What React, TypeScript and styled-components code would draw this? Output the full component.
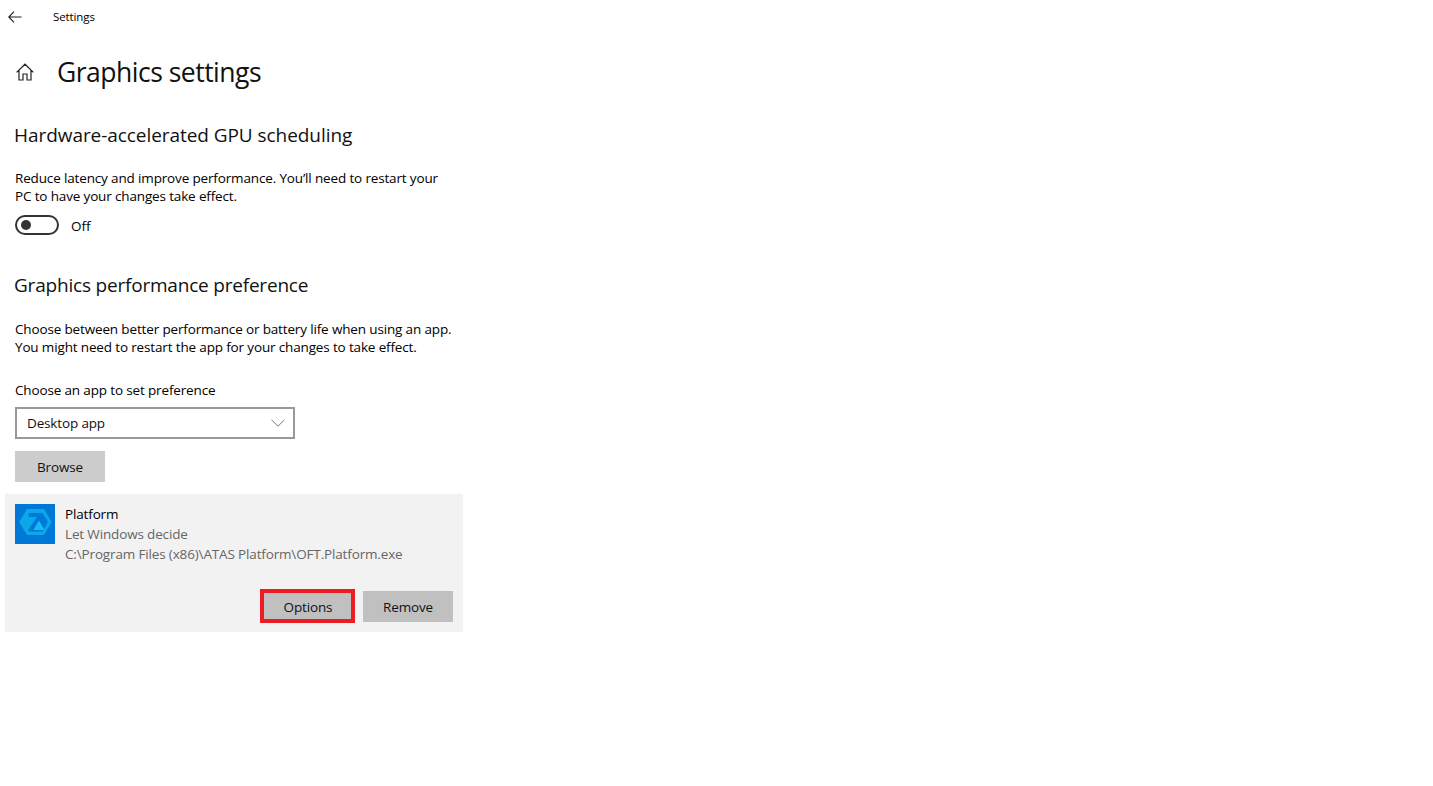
import styled, { createGlobalStyle } from "styled-components";

const GlobalStyle = createGlobalStyle`
  html, body {
    margin: 0;
    padding: 0;
    background: #fff;
    font-family: "Open Sans", "Noto Sans", "Liberation Sans", sans-serif;
    color: #000;
  }
`;

const Page = styled.div`
  width: 1433px;
  height: 786px;
  overflow: hidden;
`;

const TopBar = styled.header`
  display: flex;
  align-items: center;
  height: 33px;
  padding-left: 8px;
`;

const BackButton = styled.div`
  display: flex;
  width: 45px;
  color: #222;
`;

const BarTitle = styled.span`
  font-size: 11.5px;
  letter-spacing: -0.1px;
`;

const TitleRow = styled.div`
  display: flex;
  align-items: center;
  height: 40px;
  margin-top: 19px;
  padding-left: 16px;
`;

const HomeIcon = styled.div`
  display: flex;
  width: 41px;
  color: #222;
`;

const PageTitle = styled.h1`
  margin: 0;
  font-size: 26.5px;
  font-weight: 400;
  line-height: 40px;
  letter-spacing: -0.5px;
  color: #111;
`;

const Column = styled.main`
  display: flex;
  flex-direction: column;
  width: 458px;
  padding-left: 5px;
`;

const SectionTitle = styled.h2<{ $top: number; $spacing: number }>`
  margin: ${(p) => p.$top}px 0 0 9px;
  font-size: 19px;
  font-weight: 400;
  line-height: 28px;
  letter-spacing: ${(p) => p.$spacing}px;
  color: #111;
`;

const Paragraph = styled.p<{ $top: number }>`
  margin: ${(p) => p.$top}px 0 0 10px;
  font-size: 13.5px;
  line-height: 18px;
  letter-spacing: -0.15px;
  white-space: nowrap;
`;

const ToggleRow = styled.div`
  display: flex;
  align-items: center;
  gap: 12px;
  height: 20px;
  margin: 10px 0 0 10px;
  font-size: 13.5px;
`;

const ToggleTrack = styled.div`
  display: flex;
  align-items: center;
  box-sizing: border-box;
  width: 44px;
  height: 20px;
  padding-left: 4px;
  border: 2px solid #333;
  border-radius: 10px;
`;

const ToggleKnob = styled.div`
  width: 10px;
  height: 10px;
  border-radius: 50%;
  background: #333;
`;

const ToggleLabel = styled.span`
  margin-top: 2px;
`;

const FieldLabel = styled.label`
  margin: 25px 0 0 10px;
  font-size: 13.5px;
  line-height: 18px;
  letter-spacing: -0.15px;
`;

const Select = styled.div`
  display: flex;
  align-items: center;
  justify-content: space-between;
  box-sizing: border-box;
  width: 280px;
  height: 32px;
  margin: 8px 0 0 10px;
  padding: 0 8px 0 10px;
  border: 2px solid #999;
  font-size: 13.5px;
  letter-spacing: -0.15px;
  color: #111;
`;

const Button = styled.div<{ $tone: string }>`
  display: flex;
  align-items: center;
  justify-content: center;
  width: 90px;
  height: 31px;
  background: ${(p) => p.$tone};
  font-size: 13.5px;
  letter-spacing: -0.15px;
  color: #111;
`;

const BrowseWrap = styled.div`
  margin: 12px 0 0 10px;
`;

const Card = styled.section`
  display: flex;
  flex-direction: column;
  box-sizing: border-box;
  height: 138px;
  margin-top: 12px;
  padding: 10px;
  background: #f2f2f2;
`;

const AppRow = styled.div`
  display: flex;
  gap: 10px;
`;

const AppIcon = styled.div`
  display: flex;
  width: 40px;
  height: 40px;
`;

const AppText = styled.div`
  display: flex;
  flex-direction: column;
  font-size: 13.5px;
  line-height: 20px;
  letter-spacing: -0.15px;
`;

const AppDetail = styled.span`
  color: #666;
  white-space: nowrap;
`;

const CardActions = styled.div`
  display: flex;
  justify-content: flex-end;
  gap: 10px;
  margin-top: auto;
`;

const OptionsHighlight = styled.div`
  position: relative;

  &::after {
    content: "";
    position: absolute;
    inset: -2px -2px -1px -3px;
    border: 4px solid #ed1c24;
  }
`;

export default function App() {
  return (
    <Page>
      <GlobalStyle />
      <TopBar>
        <BackButton>
          <svg width="14" height="12" viewBox="0 0 14 12" fill="none" stroke="currentColor" strokeWidth="1.1">
            <path d="M13.5 6H.9M6 .6.8 6 6 11.4" />
          </svg>
        </BackButton>
        <BarTitle>Settings</BarTitle>
      </TopBar>
      <TitleRow>
        <HomeIcon>
          <svg width="18" height="18" viewBox="0 0 18 18" fill="none" stroke="currentColor" strokeWidth="1.2">
            <path d="M.6 9.4 9 1.2l8.4 8.2M3 7.4V17h4v-6h4v6h4V7.4" />
          </svg>
        </HomeIcon>
        <PageTitle>Graphics settings</PageTitle>
      </TitleRow>
      <Column>
        <SectionTitle $top={29} $spacing={-0.06}>Hardware-accelerated GPU scheduling</SectionTitle>
        <Paragraph $top={20}>
          Reduce latency and improve performance. You’ll need to restart your
          <br />
          PC to have your changes take effect.
        </Paragraph>
        <ToggleRow>
          <ToggleTrack>
            <ToggleKnob />
          </ToggleTrack>
          <ToggleLabel>Off</ToggleLabel>
        </ToggleRow>
        <SectionTitle $top={36} $spacing={-0.2}>Graphics performance preference</SectionTitle>
        <Paragraph $top={21}>
          Choose between better performance or battery life when using an app.
          <br />
          You might need to restart the app for your changes to take effect.
        </Paragraph>
        <FieldLabel>Choose an app to set preference</FieldLabel>
        <Select>
          Desktop app
          <svg width="14" height="8" viewBox="0 0 14 8" fill="none" stroke="#777" strokeWidth="1">
            <path d="M.5.8 7 7.2 13.5.8" />
          </svg>
        </Select>
        <BrowseWrap>
          <Button $tone="#cccccc">Browse</Button>
        </BrowseWrap>
        <Card>
          <AppRow>
            <AppIcon>
              <svg width="40" height="40" viewBox="0 0 40 40">
                <rect width="40" height="40" fill="#0078d7" />
                <path d="M12 5h17l7.500 13L29 31H12L4 18z" fill="#0aa8e8" />
                <path d="M13.500 9h14L33 18l-5.500 9.500H13.500z" fill="#0078d7" />
                <path d="M13.500 9v4H22L12.500 27 8 18z" fill="#0aa8e8" />
                <path d="M24 16.500l5.500 9.500H18.500z" fill="#14bdf0" />
              </svg>
            </AppIcon>
            <AppText>
              <span>Platform</span>
              <AppDetail>Let Windows decide</AppDetail>
              <AppDetail>C:\Program Files (x86)\ATAS Platform\OFT.Platform.exe</AppDetail>
            </AppText>
          </AppRow>
          <CardActions>
            <OptionsHighlight>
              <Button $tone="#c0c0c0">Options</Button>
            </OptionsHighlight>
            <Button $tone="#c0c0c0">Remove</Button>
          </CardActions>
        </Card>
      </Column>
    </Page>
  );
}
